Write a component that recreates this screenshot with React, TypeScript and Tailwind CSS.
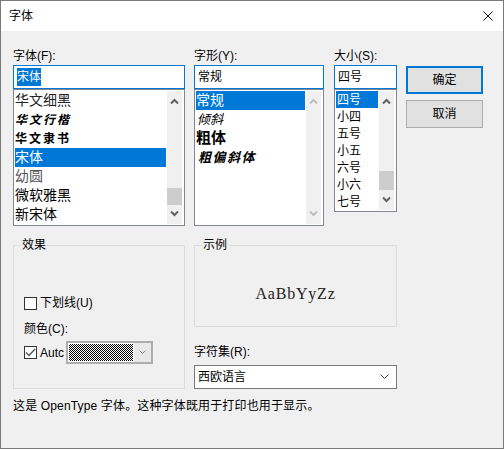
const FONT = "font-['Liberation_Sans','Noto_Sans_CJK_SC',sans-serif]";

function Chevron({ up, color = "#606060" }: { up?: boolean; color?: string }) {
  return (
    <svg width="9" height="7" viewBox="0 0 9 7" fill="none">
      <path d={up ? "M1 5.5 L4.5 2 L8 5.5" : "M1 1.5 L4.5 5 L8 1.5"} stroke={color} strokeWidth="2" />
    </svg>
  );
}

function Scrollbar({
  thumbTop,
  thumbHeight,
  disabled,
}: {
  thumbTop?: number;
  thumbHeight?: number;
  disabled?: boolean;
}) {
  const color = disabled ? "#c0c0c0" : "#606060";
  return (
    <div className="relative flex w-[15px] shrink-0 flex-col items-center justify-between bg-[#f0f0f0] py-[7px]">
      <Chevron up color={color} />
      {thumbTop !== undefined && (
        <div className="absolute left-0 w-[15px] bg-[#cdcdcd]" style={{ top: thumbTop, height: thumbHeight }} />
      )}
      <Chevron color={color} />
    </div>
  );
}

function Field({ children }: { children: React.ReactNode }) {
  return (
    <div className="flex h-6 w-full items-center border border-[#0078d7] bg-white pl-[3px] text-[12px] text-black">
      {children}
    </div>
  );
}

function Label({ children }: { children: React.ReactNode }) {
  return <div className="h-[19px] pt-[2px] leading-[17px]">{children}</div>;
}

const fontRows = [
  { name: "华文细黑", cls: "text-[#222]" },
  { name: "华文行楷", cls: "font-bold italic text-[12px] tracking-[2px]" },
  { name: "华文隶书", cls: "font-bold text-[12px] tracking-[2px]" },
  { name: "宋体", cls: "", selected: true },
  { name: "幼圆", cls: "text-[#555]" },
  { name: "微软雅黑", cls: "" },
  { name: "新宋体", cls: "" },
];

const styleRows = [
  { name: "常规", cls: "", selected: true },
  { name: "倾斜", cls: "italic text-[13px] pl-[1px]" },
  { name: "粗体", cls: "font-bold text-[15px]" },
  { name: "粗偏斜体", cls: "font-bold italic text-[13px] tracking-[1.5px] pl-[2px]" },
];

const sizes = ["四号", "小四", "五号", "小五", "六号", "小六", "七号"];

export default function App() {
  return (
    <div className={`${FONT} flex h-[449px] w-[504px] flex-col overflow-hidden border border-[#7a7a7a] bg-[#f0f0f0] text-[12px] text-black`}>
      <div className="flex h-[30px] shrink-0 items-center justify-between bg-white pl-[8px] pr-[10px]">
        <span className="text-[12px]">字体</span>
        <svg width="10" height="10" viewBox="0 0 10 10" fill="none">
          <path d="M0.5 0.5 L9.5 9.5 M9.5 0.5 L0.5 9.5" stroke="#111" strokeWidth="1" />
        </svg>
      </div>

      <div className="flex pl-3 pt-[15px]">
        <div className="w-[172px]">
          <Label>字体(F):</Label>
          <Field>
            <span className="bg-[#0078d7] text-white">宋体</span>
          </Field>
          <div className="flex h-[137px] border border-[#82878f] bg-white py-[1px] pl-[1px] pr-[2px] text-[14px]">
            <div className="mr-[1px] flex-1">
              {fontRows.map((r) => (
                <div
                  key={r.name}
                  className={`flex h-[19px] items-center ${r.selected ? "bg-[#0078d7] text-white" : ""} ${r.cls}`}
                >
                  {r.name}
                </div>
              ))}
            </div>
            <Scrollbar thumbTop={97} thumbHeight={17} />
          </div>
        </div>

        <div className="ml-[9px] w-[130px]">
          <Label>字形(Y):</Label>
          <Field>常规</Field>
          <div className="flex h-[137px] border border-[#82878f] bg-white py-[1px] pl-[1px] pr-[2px] text-[14px]">
            <div className="mr-[1px] flex-1">
              {styleRows.map((r) => (
                <div
                  key={r.name}
                  className={`flex h-[19px] items-center ${r.selected ? "bg-[#0078d7] text-white" : ""} ${r.cls}`}
                >
                  {r.name}
                </div>
              ))}
            </div>
            <Scrollbar disabled />
          </div>
        </div>

        <div className="ml-[10px] w-[63px]">
          <Label>大小(S):</Label>
          <Field>四号</Field>
          <div className="flex h-[123px] border border-[#82878f] bg-white py-[1px] pl-[1px] pr-[2px] text-[12px]">
            <div className="mr-[1px] flex-1">
              {sizes.map((s, i) => (
                <div
                  key={s}
                  className={`flex h-[17px] items-center pl-[1px] ${i === 0 ? "bg-[#0078d7] text-white" : ""}`}
                >
                  {s}
                </div>
              ))}
            </div>
            <Scrollbar thumbTop={80} thumbHeight={19} />
          </div>
        </div>

        <div className="ml-[9px] flex w-[77px] flex-col gap-[6px] pt-[20px]">
          <button className="h-[28px] border-2 border-[#0078d7] bg-[#e1e1e1] text-[12px]">确定</button>
          <button className="h-[28px] border border-[#adadad] bg-[#e1e1e1] text-[12px]">取消</button>
        </div>
      </div>

      <div className="mt-[13px] flex pl-3">
        <fieldset className="h-[150px] w-[172px] border border-[#dcdcdc] pl-[10px] pt-[45px]">
          <legend className="ml-[-3px] px-[1px] text-[12px] leading-[12px]">效果</legend>
          <label className="flex h-[14px] items-center gap-[3px]">
            <span className="h-[13px] w-[13px] border border-[#333] bg-white" />
            <span>下划线(U)</span>
          </label>
          <div className="mt-[12px] h-[14px] leading-[14px]">颜色(C):</div>
          <div className="mt-[5px] flex items-center">
            <span className="flex h-[13px] w-[13px] items-center justify-center border border-[#333] bg-white">
              <svg width="11" height="9" viewBox="0 0 11 9" fill="none">
                <path d="M1 4.5 L4 7.5 L10 1" stroke="#555" strokeWidth="1.4" />
              </svg>
            </span>
            <span className="ml-[3px] w-[24px] whitespace-nowrap">Autc</span>
            <div className="ml-[2px] flex h-[23px] w-[87px] border-2 border-[#adadad] bg-white">
              <div className="m-[1px] flex-1 bg-[repeating-conic-gradient(#000_0_25%,#fff_0_50%)] bg-size-[2px_2px]" />
              <div className="flex w-[17px] items-center justify-center bg-[#e8e8e8]">
                <svg width="7" height="5" viewBox="0 0 7 5" fill="none">
                  <path d="M0.5 0.5 L3.5 3.5 L6.5 0.5" stroke="#888" strokeWidth="1" />
                </svg>
              </div>
            </div>
          </div>
        </fieldset>

        <div className="ml-[9px] w-[203px]">
          <fieldset className="h-[88px] border border-[#dcdcdc] pl-[7px]">
            <legend className="px-[1px] text-[12px] leading-[12px]">示例</legend>
            <div className="flex h-[74px] items-center justify-center pr-[7px] pt-[12px] font-['Liberation_Serif',serif] text-[16px] tracking-[0.8px] text-[#222]">
              AaBbYyZz
            </div>
          </fieldset>
          <div className="mt-[17px] h-[16px] leading-[16px]">字符集(R):</div>
          <div className="mt-[5px] flex h-6 items-center justify-between border border-[#7a7a7a] bg-white pl-[3px] pr-[7px]">
            <span>西欧语言</span>
            <svg width="9" height="6" viewBox="0 0 9 6" fill="none">
              <path d="M0.5 0.5 L4.5 4.5 L8.5 0.5" stroke="#444" strokeWidth="1" />
            </svg>
          </div>
        </div>
      </div>

      <div className="mt-[9px] pl-3 leading-[16px] tracking-[0.15px]">这是 OpenType 字体。这种字体既用于打印也用于显示。</div>
    </div>
  );
}
